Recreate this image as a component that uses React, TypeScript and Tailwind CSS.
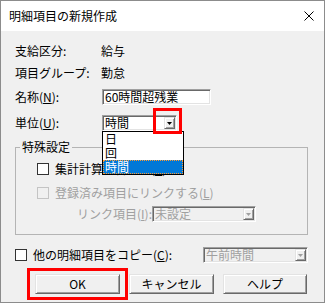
import React from 'react';

const sunken =
  'border border-t-[#a0a0a0] border-l-[#a0a0a0] border-r-white border-b-white shadow-[inset_1px_1px_0_#696969,inset_-1px_-1px_0_#e3e3e3] p-[1px]';
const raised =
  'border border-t-[#e3e3e3] border-l-[#e3e3e3] border-r-[#696969] border-b-[#696969] shadow-[inset_1px_1px_0_#ffffff,inset_-1px_-1px_0_#a0a0a0] bg-[#f0f0f0]';

function Arrow({ disabled }: { disabled?: boolean }) {
  return (
    <svg width="5" height="3" viewBox="0 0 5 3">
      <path d="M0 0H5L2.5 3Z" fill={disabled ? '#a0a0a0' : '#000'} />
    </svg>
  );
}

function Combo({
  value,
  className,
  disabled,
}: {
  value: string;
  className: string;
  disabled?: boolean;
}) {
  return (
    <div
      className={`flex h-[16px] ${sunken} ${
        disabled ? 'bg-[#f0f0f0] text-[#a0a0a0]' : 'bg-white text-black'
      } ${className}`}
    >
      <div className="flex flex-1 items-center whitespace-nowrap pl-[1px] text-[12px] leading-[12px]">
        {value}
      </div>
      <div className={`flex w-[11px] shrink-0 items-center justify-center ${raised}`}>
        <Arrow disabled={disabled} />
      </div>
    </div>
  );
}

function Check({ disabled }: { disabled?: boolean }) {
  return (
    <div
      className={`h-[12px] w-[12px] shrink-0 border ${
        disabled ? 'border-[#c4c4c4] bg-[#f0f0f0]' : 'border-[#333333] bg-white'
      }`}
    />
  );
}

export default function App() {
  return (
    <div className="relative flex h-[303px] w-[325px] flex-col border border-[#8c8c8c] bg-[#f0f0f0] font-['Noto_Sans_CJK_JP',sans-serif] text-[12px] text-black">
      {/* title bar */}
      <div className="flex h-[30px] shrink-0 items-center justify-between bg-white pl-[8px] pr-[10px]">
        <span className="text-[12px] leading-[16px]">明細項目の新規作成</span>
        <svg width="10" height="10" viewBox="0 0 10 10">
          <path d="M0.5 0.5L9.5 9.5M9.5 0.5L0.5 9.5" stroke="#000" strokeWidth="1" />
        </svg>
      </div>

      <div className="flex flex-col pl-[14px]">
        <div className="mt-[12px] flex h-[16px] items-center leading-[16px]">
          <span className="w-[86px]">支給区分:</span>
          <span>給与</span>
        </div>
        <div className="mt-[6px] flex h-[16px] items-center leading-[16px]">
          <span className="w-[86px]">項目グループ:</span>
          <span>勤怠</span>
        </div>
        <div className="mt-[8px] flex h-[16px] items-center leading-[16px]">
          <span className="w-[87px]">
            名称(<u>N</u>):
          </span>
          <div className={`flex h-[16px] w-[109px] items-center bg-white pl-[2px] leading-[12px] ${sunken}`}>
            60時間超残業
          </div>
        </div>
        <div className="mt-[10px] flex h-[16px] items-center leading-[16px]">
          <span className="w-[87px]">
            単位(<u>U</u>):
          </span>
          <div className="relative z-10">
            <Combo value="時間" className="w-[75px]" />
            {/* dropped list */}
            <div className="absolute left-0 top-[16px] flex w-[82px] flex-col border border-[#000] bg-white">
              <div className="h-[14px] pl-[2px] leading-[14px]">日</div>
              <div className="h-[14px] pl-[2px] leading-[14px]">回</div>
              <div className="h-[14px] border border-dotted border-[#ff9a2f] bg-[#0078d7] pl-[1px] leading-[12px] text-white">
                時間
              </div>
            </div>
            {/* highlight */}
            <div className="absolute left-[51px] top-[-7px] h-[26px] w-[29px] border-[3px] border-[#ff0000]" />
          </div>
        </div>

        <fieldset className="mt-[8px] h-[96px] w-[293px] border border-[#b4b4b4]">
          <legend className="ml-[4px] px-[2px] leading-[16px]">特殊設定</legend>
          <div className="ml-[21px] mt-[6px] flex h-[16px] items-center gap-[6px] leading-[16px]">
            <Check />
            <span>
              集計計算に含める(<u>T</u>)
            </span>
          </div>
          <div className="ml-[21px] mt-[8px] flex h-[16px] items-center gap-[6px] leading-[16px] text-[#a0a0a0]">
            <Check disabled />
            <span>
              登録済み項目にリンクする(<u>L</u>)
            </span>
          </div>
          <div className="ml-[61px] mt-[5px] flex h-[16px] items-center leading-[16px] text-[#a0a0a0]">
            <span className="w-[75px]">
              リンク項目(<u>I</u>):
            </span>
            <Combo value="未設定" className="w-[104px]" disabled />
          </div>
        </fieldset>

        <div className="mt-[12px] flex h-[16px] w-[293px] items-center leading-[16px]">
          <Check />
          <span className="ml-[6px]">
            他の明細項目をコピー(<u>C</u>):
          </span>
          <Combo value="午前時間" className="ml-auto w-[105px]" disabled />
        </div>

        <div className="ml-[20px] mt-[11px] flex gap-[9px]">
          <div className="relative">
            <button className={`flex h-[20px] w-[85px] items-center justify-center leading-[16px] ${raised}`}>
              OK
            </button>
            <div className="absolute left-[-8px] top-[-6px] h-[32px] w-[101px] border-[3px] border-[#ff0000]" />
          </div>
          <button className={`flex h-[20px] w-[85px] items-center justify-center leading-[16px] ${raised}`}>
            キャンセル
          </button>
          <button className={`flex h-[20px] w-[84px] items-center justify-center leading-[16px] ${raised}`}>
            ヘルプ
          </button>
        </div>
      </div>
    </div>
  );
}
